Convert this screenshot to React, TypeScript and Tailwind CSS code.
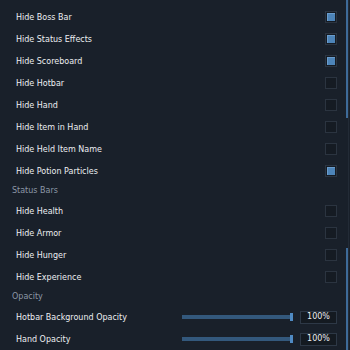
import { useState } from 'react'

type Item = { label: string; on?: boolean }

const hud: Item[] = [
  { label: 'Hide Boss Bar', on: true },
  { label: 'Hide Status Effects', on: true },
  { label: 'Hide Scoreboard', on: true },
  { label: 'Hide Hotbar' },
  { label: 'Hide Hand' },
  { label: 'Hide Item in Hand' },
  { label: 'Hide Held Item Name' },
  { label: 'Hide Potion Particles', on: true },
]

const bars: Item[] = [
  { label: 'Hide Health' },
  { label: 'Hide Armor' },
  { label: 'Hide Hunger' },
  { label: 'Hide Experience' },
]

const sliders = [
  { label: 'Hotbar Background Opacity', value: 100 },
  { label: 'Hand Opacity', value: 100 },
]

function Header({ title }: { title: string }) {
  return (
    <div className="h-[18px] flex items-center pl-3 text-[8px] text-[#8c97a6]">{title}</div>
  )
}

function Toggle({ item }: { item: Item }) {
  const [on, setOn] = useState(!!item.on)
  return (
    <div className="h-[22px] flex items-center justify-between pl-4 pr-[13px]">
      <span className="text-[8px] text-[#eceef1] pt-[2px]">{item.label}</span>
      <button
        onClick={() => setOn((v) => !v)}
        className="w-3 h-3 border border-[#2b3440] bg-[#151b23] flex items-center justify-center"
      >
        {on && <span className="w-2 h-2 bg-[#4d84b8] border-t border-l border-[#6a9ccc]" />}
      </button>
    </div>
  )
}

function Slider({ label, value }: { label: string; value: number }) {
  return (
    <div className="h-[22px] flex items-center pl-4 pr-[13px]">
      <span className="flex-1 text-[8px] text-[#eceef1] pt-[2px]">{label}</span>
      <div className="relative w-[111px] h-1 bg-[#33587c] mr-[7px]">
        <span
          className="absolute top-[-2px] w-[3px] h-2 bg-[#4f8ac3]"
          style={{ left: `calc(${value}% - 3px)` }}
        />
      </div>
      <div className="w-[37px] h-[13px] border border-[#2d3846] bg-[#141a21] flex items-center justify-center text-[8px] text-[#eceef1]">
        {value}%
      </div>
    </div>
  )
}

export default function App() {
  return (
    <div
      className="relative w-[350px] h-[350px] overflow-hidden bg-[#19202a]"
      style={{ fontFamily: '"DejaVu Sans", "Liberation Sans", sans-serif' }}
    >
      <div className="mt-[-12px]">
        <Header title="HUD Elements" />
        {hud.map((i) => (
          <Toggle key={i.label} item={i} />
        ))}
        <Header title="Status Bars" />
        {bars.map((i) => (
          <Toggle key={i.label} item={i} />
        ))}
        <Header title="Opacity" />
        {sliders.map((s) => (
          <Slider key={s.label} {...s} />
        ))}
      </div>

      {/* scrollbars */}
      <div className="absolute top-0 bottom-0 right-[1px] w-px bg-[#232b36]" />
      <div className="absolute top-0 right-[2px] w-[2px] h-[118px] bg-[#3e6b99]" />
      <div className="absolute top-[248px] bottom-0 right-[2px] w-[2px] bg-[#3e6b99]" />
    </div>
  )
}
